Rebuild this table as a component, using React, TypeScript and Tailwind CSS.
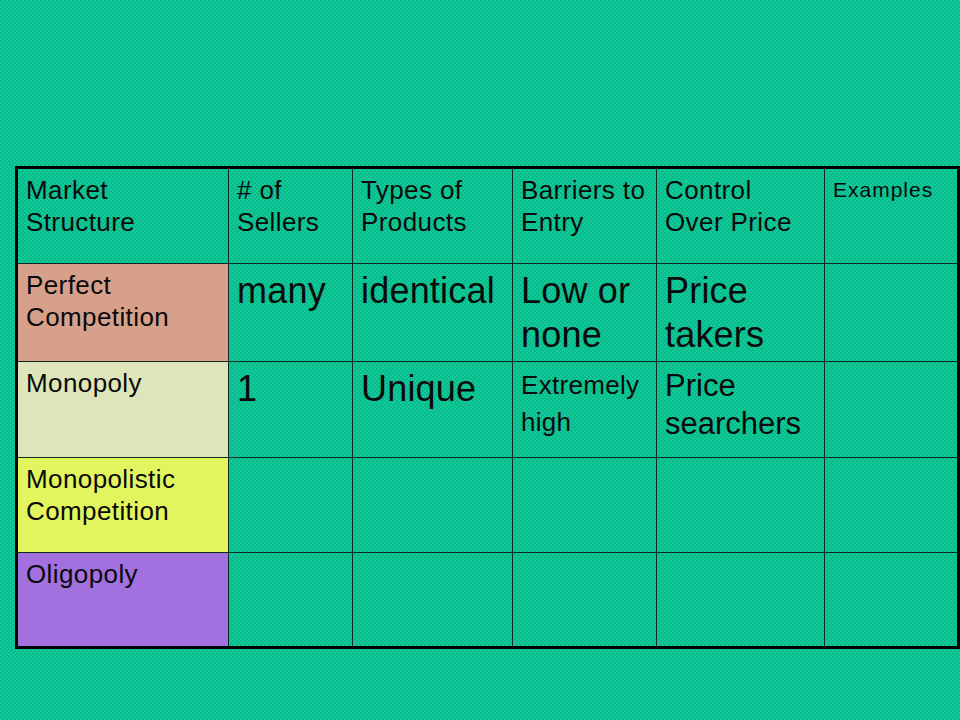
import React from "react";

type Cell = { text?: React.ReactNode; cls?: string; bg?: string };

const label = "text-[26px] leading-[32px] tracking-[0.4px]";
const big = "text-[36px] leading-[44px] tracking-[0.2px]";

const rows: { h: string; cells: Cell[] }[] = [
  {
    h: "h-[95px]",
    cells: [
      { text: <>Market<br />Structure</>, cls: label },
      { text: <># of<br />Sellers</>, cls: label },
      { text: <>Types of<br />Products</>, cls: label },
      { text: <>Barriers to<br />Entry</>, cls: label },
      { text: <>Control<br />Over Price</>, cls: label },
      { text: "Examples", cls: "text-[21px] leading-[32px] tracking-[1px] pt-[1px]" },
    ],
  },
  {
    h: "h-[98px]",
    cells: [
      { text: <>Perfect<br />Competition</>, cls: label, bg: "bg-[#d6a08b]" },
      { text: "many", cls: big },
      { text: "identical", cls: big },
      { text: <>Low or<br />none</>, cls: big },
      { text: <>Price<br />takers</>, cls: big },
      {},
    ],
  },
  {
    h: "h-[96px]",
    cells: [
      { text: "Monopoly", cls: label, bg: "bg-[#dee6b9]" },
      { text: "1", cls: big },
      { text: "Unique", cls: big },
      { text: <>Extremely<br />high</>, cls: "text-[26px] leading-[37px] tracking-[0.3px]" },
      { text: <>Price<br />searchers</>, cls: "text-[31px] leading-[38px]" },
      {},
    ],
  },
  {
    h: "h-[95px]",
    cells: [
      { text: <>Monopolistic<br />Competition</>, cls: label, bg: "bg-[#e2f55e]" },
      {}, {}, {}, {}, {},
    ],
  },
  {
    h: "h-[93px]",
    cells: [
      { text: "Oligopoly", cls: label, bg: "bg-[#a370e0]" },
      {}, {}, {}, {}, {},
    ],
  },
];

export default function App() {
  return (
    <div
      className="w-[960px] h-[720px] overflow-hidden bg-[#0ecb9a] bg-[radial-gradient(circle_at_1px_1px,rgba(0,90,60,0.22)_0.6px,transparent_1px),radial-gradient(circle_at_3px_3px,rgba(0,90,60,0.22)_0.6px,transparent_1px)] bg-[length:4px_4px] pt-[166px] pl-[15px]"
      style={{ fontFamily: '"Liberation Sans", Arial, sans-serif' }}
    >
      <div className="w-[945px] border-[3px] border-black text-[#0a0a0a] flex flex-col">
        {rows.map((row, ri) => (
          <div
            key={ri}
            className={`grid grid-cols-[211px_124px_160px_144px_168px_132px] ${row.h} ${ri < rows.length - 1 ? "border-b border-[#0c2a20]" : ""}`}
          >
            {row.cells.map((c, ci) => (
              <div
                key={ci}
                className={`pl-2 pt-[5px] ${ci < 5 ? "border-r border-[#0c2a20]" : ""} ${c.bg ?? ""} ${c.cls ?? ""}`}
              >
                {c.text}
              </div>
            ))}
          </div>
        ))}
      </div>
    </div>
  );
}
